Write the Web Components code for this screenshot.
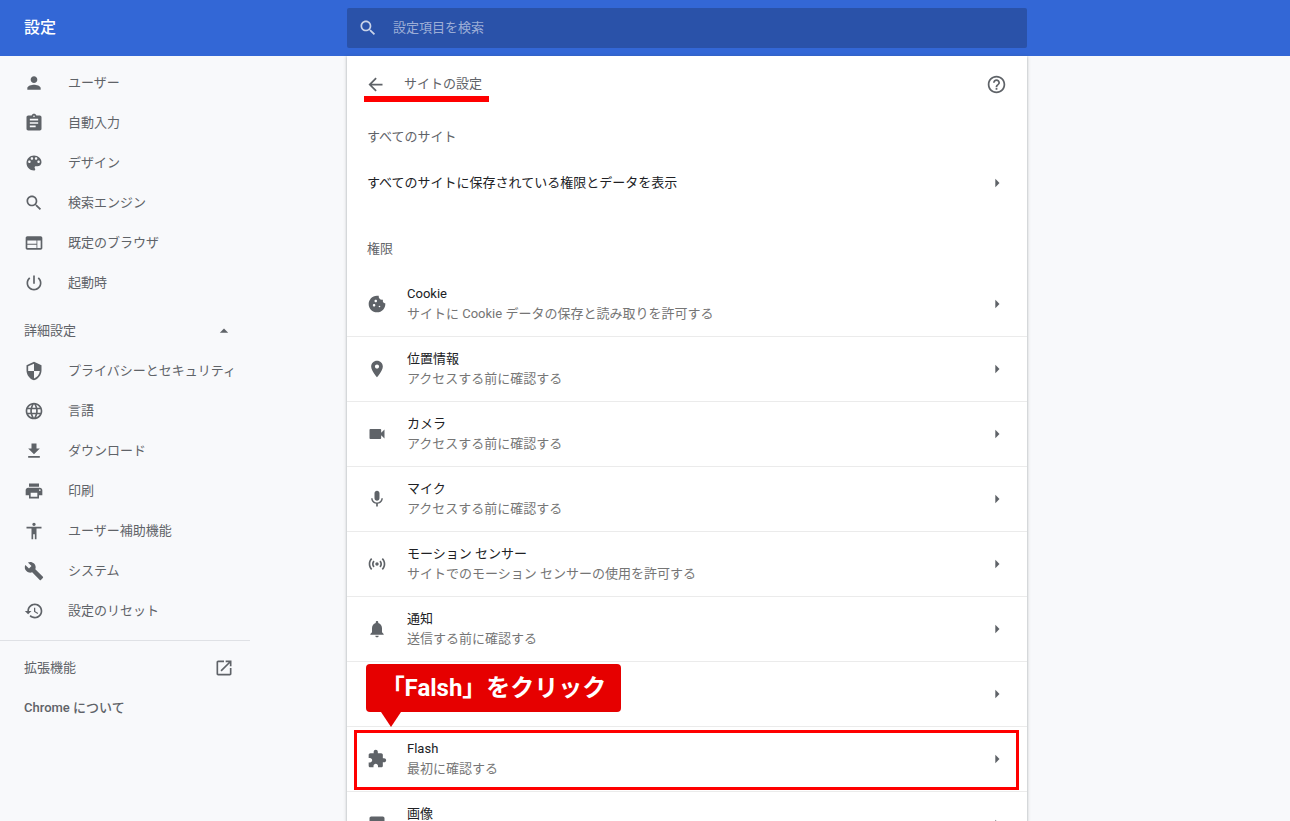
<!DOCTYPE html>
<html lang="ja">
<head>
<meta charset="utf-8">
<title>設定</title>
<style>
  html, body { margin: 0; height: 100%; overflow: hidden; background: #f8f9fb; }
  body { font: 13px/20px Roboto, "Noto Sans CJK JP", sans-serif; }
</style>
</head>
<body>
<settings-app>
  <nav-item slot="nav" icon="person">ユーザー</nav-item>
  <nav-item slot="nav" icon="assignment">自動入力</nav-item>
  <nav-item slot="nav" icon="palette">デザイン</nav-item>
  <nav-item slot="nav" icon="search">検索エンジン</nav-item>
  <nav-item slot="nav" icon="web">既定のブラウザ</nav-item>
  <nav-item slot="nav" icon="power">起動時</nav-item>
  <nav-head slot="nav" icon="drop-up" class="advanced">詳細設定</nav-head>
  <nav-item slot="nav" icon="security">プライバシーとセキュリティ</nav-item>
  <nav-item slot="nav" icon="language">言語</nav-item>
  <nav-item slot="nav" icon="download">ダウンロード</nav-item>
  <nav-item slot="nav" icon="print">印刷</nav-item>
  <nav-item slot="nav" icon="accessibility">ユーザー補助機能</nav-item>
  <nav-item slot="nav" icon="build">システム</nav-item>
  <nav-item slot="nav" icon="restore">設定のリセット</nav-item>
  <nav-rule slot="nav"></nav-rule>
  <nav-head slot="nav" icon="open-new">拡張機能</nav-head>
  <nav-head slot="nav" class="about">Chrome について</nav-head>

  <site-head slot="main">サイトの設定</site-head>
  <section-label slot="main">すべてのサイト</section-label>
  <link-row slot="main">すべてのサイトに保存されている権限とデータを表示</link-row>
  <section-label slot="main" class="perm">権限</section-label>
  <site-row slot="main" icon="cookie" first><span slot="title">Cookie</span>サイトに Cookie データの保存と読み取りを許可する</site-row>
  <site-row slot="main" icon="place"><span slot="title">位置情報</span>アクセスする前に確認する</site-row>
  <site-row slot="main" icon="videocam"><span slot="title">カメラ</span>アクセスする前に確認する</site-row>
  <site-row slot="main" icon="mic"><span slot="title">マイク</span>アクセスする前に確認する</site-row>
  <site-row slot="main" icon="sensors"><span slot="title">モーション センサー</span>サイトでのモーション センサーの使用を許可する</site-row>
  <site-row slot="main" icon="notifications"><span slot="title">通知</span>送信する前に確認する</site-row>
  <site-row slot="main"></site-row>
  <site-row slot="main" icon="extension"><span slot="title">Flash</span>最初に確認する</site-row>
  <site-row slot="main" icon="photo"><span slot="title">画像</span></site-row>

  <click-callout slot="overlay">「Falsh」をクリック</click-callout>
  <mark-box slot="overlay" class="underline"></mark-box>
  <mark-box slot="overlay" class="flash"></mark-box>
</settings-app>

<script>
(() => {
  const ICONS = {
    person: "M12 12c2.21 0 4-1.79 4-4s-1.79-4-4-4-4 1.79-4 4 1.79 4 4 4zm0 2c-2.67 0-8 1.34-8 4v2h16v-2c0-2.66-5.33-4-8-4z",
    assignment: "M19 3h-4.18C14.4 1.84 13.3 1 12 1c-1.3 0-2.4.84-2.82 2H5c-1.1 0-2 .9-2 2v14c0 1.1.9 2 2 2h14c1.1 0 2-.9 2-2V5c0-1.1-.9-2-2-2zm-7 0c.55 0 1 .45 1 1s-.45 1-1 1-1-.45-1-1 .45-1 1-1zm2 14H7v-2h7v2zm3-4H7v-2h10v2zm0-4H7V7h10v2z",
    palette: "M12 3c-4.97 0-9 4.03-9 9s4.03 9 9 9c.83 0 1.5-.67 1.5-1.5 0-.39-.15-.74-.39-1.01-.23-.26-.38-.61-.38-.99 0-.83.67-1.5 1.5-1.5H16c2.76 0 5-2.24 5-5 0-4.42-4.03-8-9-8zm-5.5 9c-.83 0-1.5-.67-1.5-1.5S5.67 9 6.5 9 8 9.67 8 10.5 7.33 12 6.5 12zm3-4C8.67 8 8 7.33 8 6.5S8.67 5 9.5 5s1.5.67 1.5 1.5S10.33 8 9.5 8zm5 0c-.83 0-1.5-.67-1.5-1.5S13.67 5 14.5 5s1.5.67 1.5 1.5S15.33 8 14.5 8zm3 4c-.83 0-1.5-.67-1.5-1.5S16.67 9 17.5 9s1.5.67 1.5 1.5-.67 1.5-1.5 1.5z",
    search: "M15.5 14h-.79l-.28-.27C15.41 12.59 16 11.11 16 9.5 16 5.91 13.09 3 9.5 3S3 5.91 3 9.5 5.91 16 9.5 16c1.61 0 3.09-.59 4.23-1.57l.27.28v.79l5 4.99L20.49 19l-4.99-5zm-6 0C7.01 14 5 11.99 5 9.5S7.01 5 9.5 5 14 7.01 14 9.5 11.99 14 9.5 14z",
    web: "M20 4H4c-1.1 0-1.99.9-1.99 2L2 18c0 1.1.9 2 2 2h16c1.1 0 2-.9 2-2V6c0-1.1-.9-2-2-2zm-5 14H4v-4h11v4zm0-5H4V9h11v4zm5 5h-4V9h4v9z",
    power: "M13 3h-2v10h2V3zm4.83 2.17l-1.42 1.42C17.99 7.86 19 9.81 19 12c0 3.87-3.13 7-7 7s-7-3.13-7-7c0-2.19 1.01-4.14 2.58-5.42L6.17 5.17C4.23 6.82 3 9.26 3 12c0 4.97 4.03 9 9 9s9-4.03 9-9c0-2.74-1.23-5.18-3.17-6.83z",
    security: "M12 1L3 5v6c0 5.55 3.84 10.74 9 12 5.16-1.26 9-6.45 9-12V5l-9-4zm0 10.99h7c-.53 4.12-3.28 7.79-7 8.94V12H5V6.3l7-3.11v8.8z",
    language: "M11.99 2C6.47 2 2 6.48 2 12s4.47 10 9.99 10C17.52 22 22 17.52 22 12S17.52 2 11.99 2zm6.93 6h-2.95c-.32-1.25-.78-2.45-1.38-3.56 1.84.63 3.37 1.91 4.33 3.56zM12 4.04c.83 1.2 1.48 2.53 1.91 3.96h-3.82c.43-1.43 1.08-2.76 1.91-3.96zM4.26 14C4.1 13.36 4 12.69 4 12s.1-1.36.26-2h3.38c-.08.66-.14 1.32-.14 2 0 .68.06 1.34.14 2H4.26zm.82 2h2.95c.32 1.25.78 2.45 1.38 3.56-1.84-.63-3.37-1.9-4.33-3.56zm2.95-8H5.08c.96-1.66 2.49-2.93 4.33-3.56C8.81 5.55 8.35 6.75 8.03 8zM12 19.96c-.83-1.2-1.48-2.53-1.91-3.96h3.82c-.43 1.43-1.08 2.76-1.91 3.96zM14.34 14H9.66c-.09-.66-.16-1.32-.16-2 0-.68.07-1.35.16-2h4.68c.09.65.16 1.32.16 2 0 .68-.07 1.34-.16 2zm.25 5.56c.6-1.11 1.06-2.31 1.38-3.56h2.95c-.96 1.65-2.49 2.93-4.33 3.56zM16.36 14c.08-.66.14-1.32.14-2 0-.68-.06-1.34-.14-2h3.38c.16.64.26 1.31.26 2s-.1 1.36-.26 2h-3.38z",
    download: "M19 9h-4V3H9v6H5l7 7 7-7zM5 18v2h14v-2H5z",
    print: "M19 8H5c-1.66 0-3 1.34-3 3v6h4v4h12v-4h4v-6c0-1.66-1.34-3-3-3zm-3 11H8v-5h8v5zm3-7c-.55 0-1-.45-1-1s.45-1 1-1 1 .45 1 1-.45 1-1 1zm-1-9H6v4h12V3z",
    accessibility: "M12 2c1.1 0 2 .9 2 2s-.9 2-2 2-2-.9-2-2 .9-2 2-2zm9 7h-6v13h-2v-6h-2v6H9V9H3V7h18v2z",
    build: "M22.7 19l-9.1-9.1c.9-2.3.4-5-1.5-6.9-2-2-5-2.4-7.4-1.3L9 6 6 9 1.6 4.7C.4 7.1.9 10.1 2.9 12.1c1.9 1.9 4.6 2.4 6.9 1.5l9.1 9.1c.4.4 1 .4 1.4 0l2.3-2.3c.5-.4.5-1.1.1-1.4z",
    restore: "M13 3c-4.97 0-9 4.03-9 9H1l3.89 3.89.07.14L9 12H6c0-3.87 3.13-7 7-7s7 3.13 7 7-3.13 7-7 7c-1.93 0-3.68-.79-4.94-2.06l-1.42 1.42C8.27 19.99 10.51 21 13 21c4.97 0 9-4.03 9-9s-4.03-9-9-9zm-1 5v5l4.28 2.54.72-1.21-3.5-2.08V8H12z",
    "open-new": "M19 19H5V5h7V3H5c-1.11 0-2 .9-2 2v14c0 1.1.89 2 2 2h14c1.1 0 2-.9 2-2v-7h-2v7zM14 3v2h3.59l-9.83 9.83 1.41 1.41L19 6.41V10h2V3h-7z",
    "drop-up": "M7 14l5-5 5 5z",
    "arrow-right": "M10 17l5-5-5-5v10z",
    back: "M20 11H7.83l5.59-5.59L12 4l-8 8 8 8 1.41-1.41L7.83 13H20v-2z",
    help: "M11 18h2v-2h-2v2zm1-16C6.48 2 2 6.48 2 12s4.48 10 10 10 10-4.48 10-10S17.52 2 12 2zm0 18c-4.41 0-8-3.59-8-8s3.59-8 8-8 8 3.59 8 8-3.59 8-8 8zm0-14c-2.21 0-4 1.79-4 4h2c0-1.1.9-2 2-2s2 .9 2 2c0 2-3 1.75-3 5h2c0-2.25 3-2.5 3-5 0-2.21-1.79-4-4-4z",
    cookie: "M21.95 10.99c-1.79-.03-3.7-1.95-2.68-4.22-2.97 1-5.78-1.59-5.19-4.56C7.11.74 2 6.41 2 12c0 5.52 4.48 10 10 10 5.89 0 10.54-5.08 9.95-11.01zM8.5 15c-.83 0-1.5-.67-1.5-1.5S7.67 12 8.5 12s1.5.67 1.5 1.5S9.33 15 8.5 15zm2-5C9.67 10 9 9.33 9 8.5S9.67 7 10.5 7s1.5.67 1.5 1.5-.67 1.5-1.5 1.5zm4.5 6c-.55 0-1-.45-1-1s.45-1 1-1 1 .45 1 1-.45 1-1 1z",
    place: "M12 2C8.13 2 5 5.13 5 9c0 5.25 7 13 7 13s7-7.75 7-13c0-3.87-3.13-7-7-7zm0 9.5c-1.38 0-2.5-1.12-2.5-2.5s1.12-2.5 2.5-2.5 2.5 1.12 2.5 2.5-1.12 2.5-2.5 2.5z",
    videocam: "M17 10.5V7c0-.55-.45-1-1-1H4c-.55 0-1 .45-1 1v10c0 .55.45 1 1 1h12c.55 0 1-.45 1-1v-3.5l4 4v-11l-4 4z",
    mic: "M12 14c1.66 0 2.99-1.34 2.99-3L15 5c0-1.66-1.34-3-3-3S9 3.34 9 5v6c0 1.66 1.34 3 3 3zm5.3-3c0 3-2.54 5.1-5.3 5.1S6.7 14 6.7 11H5c0 3.41 2.72 6.23 6 6.72V21h2v-3.28c3.28-.48 6-3.3 6-6.72h-1.7z",
    sensors: "M7.76 16.24C6.67 15.16 6 13.66 6 12s.67-3.16 1.76-4.24l1.42 1.42C8.45 9.9 8 10.9 8 12c0 1.1.45 2.1 1.17 2.83l-1.41 1.41zm8.48 0C17.33 15.16 18 13.66 18 12s-.67-3.16-1.76-4.24l-1.42 1.42C15.55 9.9 16 10.9 16 12c0 1.1-.45 2.1-1.17 2.83l1.41 1.41zM12 10c-1.1 0-2 .9-2 2s.9 2 2 2 2-.9 2-2-.9-2-2-2zm8 2c0 2.21-.9 4.21-2.35 5.65l1.42 1.42C20.88 17.26 22 14.76 22 12s-1.12-5.26-2.93-7.07l-1.42 1.42C19.1 7.79 20 9.79 20 12zM6.35 6.35L4.93 4.93C3.12 6.74 2 9.24 2 12s1.12 5.26 2.93 7.07l1.42-1.42C4.9 16.21 4 14.21 4 12s.9-4.21 2.35-5.65z",
    notifications: "M12 22c1.1 0 2-.9 2-2h-4c0 1.1.89 2 2 2zm6-6v-5c0-3.07-1.64-5.64-4.5-6.32V4c0-.83-.67-1.5-1.5-1.5s-1.5.67-1.5 1.5v.68C7.63 5.36 6 7.92 6 11v5l-2 2v1h16v-1l-2-2z",
    extension: "M20.5 11H19V7c0-1.1-.9-2-2-2h-4V3.5C13 2.12 11.88 1 10.5 1S8 2.12 8 3.5V5H4c-1.1 0-1.99.9-1.99 2v3.8H3.5c1.49 0 2.7 1.21 2.7 2.7s-1.21 2.7-2.7 2.7H2V20c0 1.1.9 2 2 2h3.8v-1.5c0-1.49 1.21-2.7 2.7-2.7 1.49 0 2.7 1.21 2.7 2.7V22H17c1.1 0 2-.9 2-2v-4h1.5c1.38 0 2.5-1.12 2.5-2.5S21.88 11 20.5 11z",
    photo: "M21 19V5c0-1.1-.9-2-2-2H5c-1.1 0-2 .9-2 2v14c0 1.1.9 2 2 2h14c1.1 0 2-.9 2-2zM8.5 13.5l2.5 3.01L14.5 12l4.5 6H5l3.5-4.5z"
  };

  const icon = (name) => name ? `<ui-icon name="${name}"></ui-icon>` : `<span style="width:20px;height:20px;flex:none"></span>`;

  class Base extends HTMLElement {
    constructor() {
      super();
      this.attachShadow({ mode: "open" });
    }
    connectedCallback() {
      this.shadowRoot.innerHTML = this.render();
    }
  }

  class UiIcon extends Base {
    render() {
      return `
      <style>
        :host { display: block; width: 20px; height: 20px; flex: none; color: inherit; }
        svg { display: block; width: 100%; height: 100%; fill: currentColor; }
      </style>
      <svg viewBox="0 0 24 24"><path d="${ICONS[this.getAttribute("name")]}"/></svg>`;
    }
  }

  class SettingsApp extends Base {
    render() {
      return `
      <style>
        :host { display: block; position: relative; height: 821px; overflow: hidden; }
        header { display: grid; grid-template-columns: 347px 680px; height: 56px; align-items: center; background: #3367d6; color: #fff; }
        h1 { margin: 0 0 0 24px; font-size: 16px; font-weight: 500; line-height: 24px; }
        .search { display: flex; align-items: center; gap: 15px; height: 40px; padding-left: 11px; border-radius: 2px; background: #2a52a9; color: rgba(255,255,255,.55); }
        .search ui-icon { color: rgba(255,255,255,.75); }
        .body { display: grid; grid-template-columns: 347px 680px; }
        nav { width: 250px; padding-top: 7px; }
        main { height: 765px; overflow: hidden; background: #fff; box-shadow: 0 1px 2px rgba(60,64,67,.3), 0 1px 3px 1px rgba(60,64,67,.15); }
      </style>
      <header>
        <h1>設定</h1>
        <div class="search">${icon("search")}<span>設定項目を検索</span></div>
      </header>
      <div class="body">
        <nav><slot name="nav"></slot></nav>
        <main><slot name="main"></slot></main>
      </div>
      <slot name="overlay"></slot>`;
    }
  }

  class NavItem extends Base {
    render() {
      return `
      <style>
        :host { display: flex; align-items: center; gap: 24px; height: 40px; padding-left: 24px; color: #5f6368; }
      </style>
      ${icon(this.getAttribute("icon"))}<slot></slot>`;
    }
  }

  class NavHead extends Base {
    render() {
      const name = this.getAttribute("icon");
      return `
      <style>
        :host { display: flex; align-items: center; justify-content: space-between; height: 40px; padding: 0 16px 0 24px; color: #5f6368; }
        :host(.advanced) { margin-top: 8px; }
        :host(.about) { font-weight: 500; }
      </style>
      <span><slot></slot></span>${name ? icon(name) : ""}`;
    }
  }

  class NavRule extends Base {
    render() {
      return `
      <style>
        :host { display: block; height: 1px; margin: 9px 0 7px; background: #dfe1e5; }
      </style>`;
    }
  }

  class SiteHead extends Base {
    render() {
      return `
      <style>
        :host { display: flex; align-items: center; height: 56px; padding: 0 20px 0 18px; color: #5f6368; }
        span { flex: 1; margin-left: 18px; font-size: 13px; }
        ui-icon { width: 21px; height: 21px; }
      </style>
      ${icon("back")}<span><slot></slot></span>${icon("help")}`;
    }
  }

  class SectionLabel extends Base {
    render() {
      return `
      <style>
        :host { display: flex; align-items: center; height: 50px; padding-left: 20px; color: #5f6368; }
        :host(.perm) { height: 44px; margin-top: 23px; }
      </style>
      <slot></slot>`;
    }
  }

  class LinkRow extends Base {
    render() {
      return `
      <style>
        :host { display: flex; align-items: center; justify-content: space-between; height: 42px; padding: 0 20px; color: #202124; }
        ui-icon { color: #5f6368; }
      </style>
      <span><slot></slot></span>${icon("arrow-right")}`;
    }
  }

  class SiteRow extends Base {
    render() {
      return `
      <style>
        :host { display: flex; align-items: center; gap: 20px; box-sizing: border-box; height: 65px; padding: 0 20px; border-top: 1px solid #ebebeb; color: #5f6368; }
        :host([first]) { border-top-color: transparent; }
        .text { flex: 1; }
        .title { height: 20px; color: #202124; }
        .sub { height: 20px; color: #757575; }
      </style>
      ${icon(this.getAttribute("icon"))}
      <div class="text">
        <div class="title"><slot name="title"></slot></div>
        <div class="sub"><slot></slot></div>
      </div>
      ${icon("arrow-right")}`;
    }
  }

  class ClickCallout extends Base {
    render() {
      return `
      <style>
        :host { position: absolute; left: 366px; top: 664px; display: flex; align-items: center; justify-content: center; width: 255px; height: 48px; border-radius: 4px; background: #e60000; color: #fff; font-size: 24px; font-weight: 700; line-height: 48px; white-space: nowrap; }
        :host::after { content: ""; position: absolute; left: 15px; top: 48px; border-style: solid; border-width: 15px 10px 0; border-color: #e60000 transparent transparent; }
      </style>
      <slot></slot>`;
    }
  }

  class MarkBox extends Base {
    render() {
      return `
      <style>
        :host { position: absolute; box-sizing: border-box; }
        :host(.underline) { left: 364px; top: 96px; width: 125px; height: 6px; background: #f00; }
        :host(.flash) { left: 354px; top: 730px; width: 665px; height: 60px; border: 3px solid #f00; }
      </style>`;
    }
  }

  customElements.define("ui-icon", UiIcon);
  customElements.define("nav-item", NavItem);
  customElements.define("nav-head", NavHead);
  customElements.define("nav-rule", NavRule);
  customElements.define("site-head", SiteHead);
  customElements.define("section-label", SectionLabel);
  customElements.define("link-row", LinkRow);
  customElements.define("site-row", SiteRow);
  customElements.define("click-callout", ClickCallout);
  customElements.define("mark-box", MarkBox);
  customElements.define("settings-app", SettingsApp);
})();
</script>
</body>
</html>
